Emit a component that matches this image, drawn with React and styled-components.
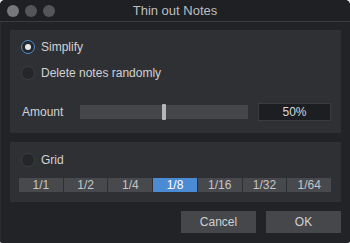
import React from "react";
import styled, { createGlobalStyle } from "styled-components";

const Global = createGlobalStyle`
  html, body { margin: 0; padding: 0; background: #e8e8e8; }
  body { font-family: "Liberation Sans", Arial, sans-serif; }
`;

const Window = styled.div`
  width: 350px;
  height: 243px;
  box-sizing: border-box;
  background: #1f2023;
  border-radius: 5px 5px 3px 3px;
  overflow: hidden;
  display: flex;
  flex-direction: column;
`;

const TitleBar = styled.div`
  height: 21px;
  flex: none;
  display: flex;
  align-items: center;
  position: relative;
  border-bottom: 1px solid #3a3b3e;
  background: #1f2023;
`;

const Lights = styled.div`
  display: flex;
  gap: 6px;
  padding-left: 7px;
`;

const Light = styled.span`
  width: 12px;
  height: 12px;
  border-radius: 50%;
  background: ${(p) => (p.$active ? "#77787b" : "#545558")};
`;

const Title = styled.div`
  position: absolute;
  left: 0;
  right: 0;
  text-align: center;
  font-size: 13px;
  color: #bdbec0;
`;

const Body = styled.div`
  flex: 1;
  display: flex;
  flex-direction: column;
  padding: 8px 9px 0 9px;
  background: #222326;
  border-left: 1px solid #2b2c2f;
`;

const Panel = styled.div`
  background: #2f3034;
  display: flex;
  flex-direction: column;
  padding: ${(p) => p.$pad};
  margin-bottom: ${(p) => p.$mb || 0}px;
`;

const RadioRow = styled.div`
  display: flex;
  align-items: center;
  height: 14px;
  gap: 6px;
  margin-bottom: ${(p) => p.$mb || 0}px;
  color: #d2d3d5;
  font-size: 12px;
  padding-left: 2px;
`;

const Radio = styled.span`
  width: 14px;
  height: 14px;
  box-sizing: border-box;
  border-radius: 50%;
  flex: none;
  display: flex;
  align-items: center;
  justify-content: center;
  background: #252629;
  border: 1px solid ${(p) => (p.$on ? "#4c8fd6" : "#3c3d41")};
  &::after {
    content: "";
    width: 6px;
    height: 6px;
    border-radius: 50%;
    background: #e6e6e6;
    display: ${(p) => (p.$on ? "block" : "none")};
  }
`;

const AmountRow = styled.div`
  display: flex;
  align-items: center;
  height: 18px;
`;

const Label = styled.span`
  width: 58px;
  flex: none;
  color: #d2d3d5;
  font-size: 12px;
  padding-left: 3px;
`;

const Track = styled.div`
  width: 168px;
  height: 14px;
  background: #45464a;
  position: relative;
  flex: none;
`;

const Thumb = styled.span`
  position: absolute;
  top: -1px;
  width: 4px;
  height: 16px;
  background: #b5b6b8;
  border-radius: 1px;
`;

const ValueBox = styled.div`
  margin-left: 10px;
  width: 74px;
  height: 18px;
  box-sizing: border-box;
  background: #1d1e21;
  border: 1px solid #3b3c40;
  display: flex;
  align-items: center;
  justify-content: center;
  color: #d8d9db;
  font-size: 12px;
`;

const Segments = styled.div`
  display: flex;
  gap: 1px;
`;

const Segment = styled.div`
  width: 44px;
  height: 14px;
  display: flex;
  align-items: center;
  justify-content: center;
  font-size: 12px;
  color: ${(p) => (p.$on ? "#ffffff" : "#c4c5c7")};
  background: ${(p) => (p.$on ? "#4a8bd4" : "#48494d")};
`;

const Footer = styled.div`
  display: flex;
  justify-content: flex-end;
  gap: 10px;
  margin-top: 9px;
`;

const Button = styled.div`
  width: ${(p) => p.$w}px;
  height: 22px;
  display: flex;
  align-items: center;
  justify-content: center;
  background: #46474b;
  color: #d0d1d3;
  font-size: 12px;
`;

const grids = ["1/1", "1/2", "1/4", "1/8", "1/16", "1/32", "1/64"];

export default function App() {
  return (
    <>
      <Global />
      <Window>
        <TitleBar>
          <Lights>
            <Light $active />
            <Light />
            <Light />
          </Lights>
          <Title>Thin out Notes</Title>
        </TitleBar>
        <Body>
          <Panel $pad="10px 10px 12px 9px" $mb={9}>
            <RadioRow $mb={12}>
              <Radio $on />
              Simplify
            </RadioRow>
            <RadioRow $mb={23}>
              <Radio />
              Delete notes randomly
            </RadioRow>
            <AmountRow>
              <Label>Amount</Label>
              <Track>
                <Thumb style={{ left: "82px" }} />
              </Track>
              <ValueBox>50%</ValueBox>
            </AmountRow>
          </Panel>
          <Panel $pad="11px 10px 10px 9px">
            <RadioRow $mb={11}>
              <Radio />
              Grid
            </RadioRow>
            <Segments>
              {grids.map((g) => (
                <Segment key={g} $on={g === "1/8"}>
                  {g}
                </Segment>
              ))}
            </Segments>
          </Panel>
          <Footer>
            <Button $w={75}>Cancel</Button>
            <Button $w={75}>OK</Button>
          </Footer>
        </Body>
      </Window>
    </>
  );
}
